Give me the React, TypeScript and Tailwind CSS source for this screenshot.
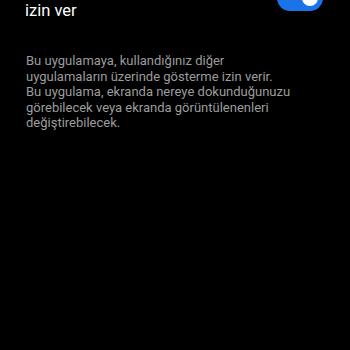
export default function App() {
  return (
    <div className="h-[350px] w-[350px] overflow-hidden bg-black font-['Roboto',sans-serif]">
      {/* permission header, scrolled so the first line is mostly off screen */}
      <div className="-mt-[22px] flex justify-between pl-[25px] pr-[27px]">
        <h1 className="whitespace-nowrap text-[16.5px] leading-[22px] text-white">
          Diğer uygulamalar üzerinde
          <br />
          izin ver
        </h1>
        <div className="relative mt-[7px] h-[26px] w-[46px] shrink-0 rounded-full bg-[#1a73e8]">
          <div className="absolute right-[5px] top-[5px] h-[16px] w-[16px] rounded-full bg-white" />
        </div>
      </div>

      <p className="mt-[31px] whitespace-nowrap pl-[26px] text-[13px] leading-[15.5px] text-[#9c9c9c]">
        Bu uygulamaya, kullandığınız diğer
        <br />
        uygulamaların üzerinde gösterme izin verir.
        <br />
        Bu uygulama, ekranda nereye dokunduğunuzu
        <br />
        görebilecek veya ekranda görüntülenenleri
        <br />
        değiştirebilecek.
      </p>
    </div>
  );
}
